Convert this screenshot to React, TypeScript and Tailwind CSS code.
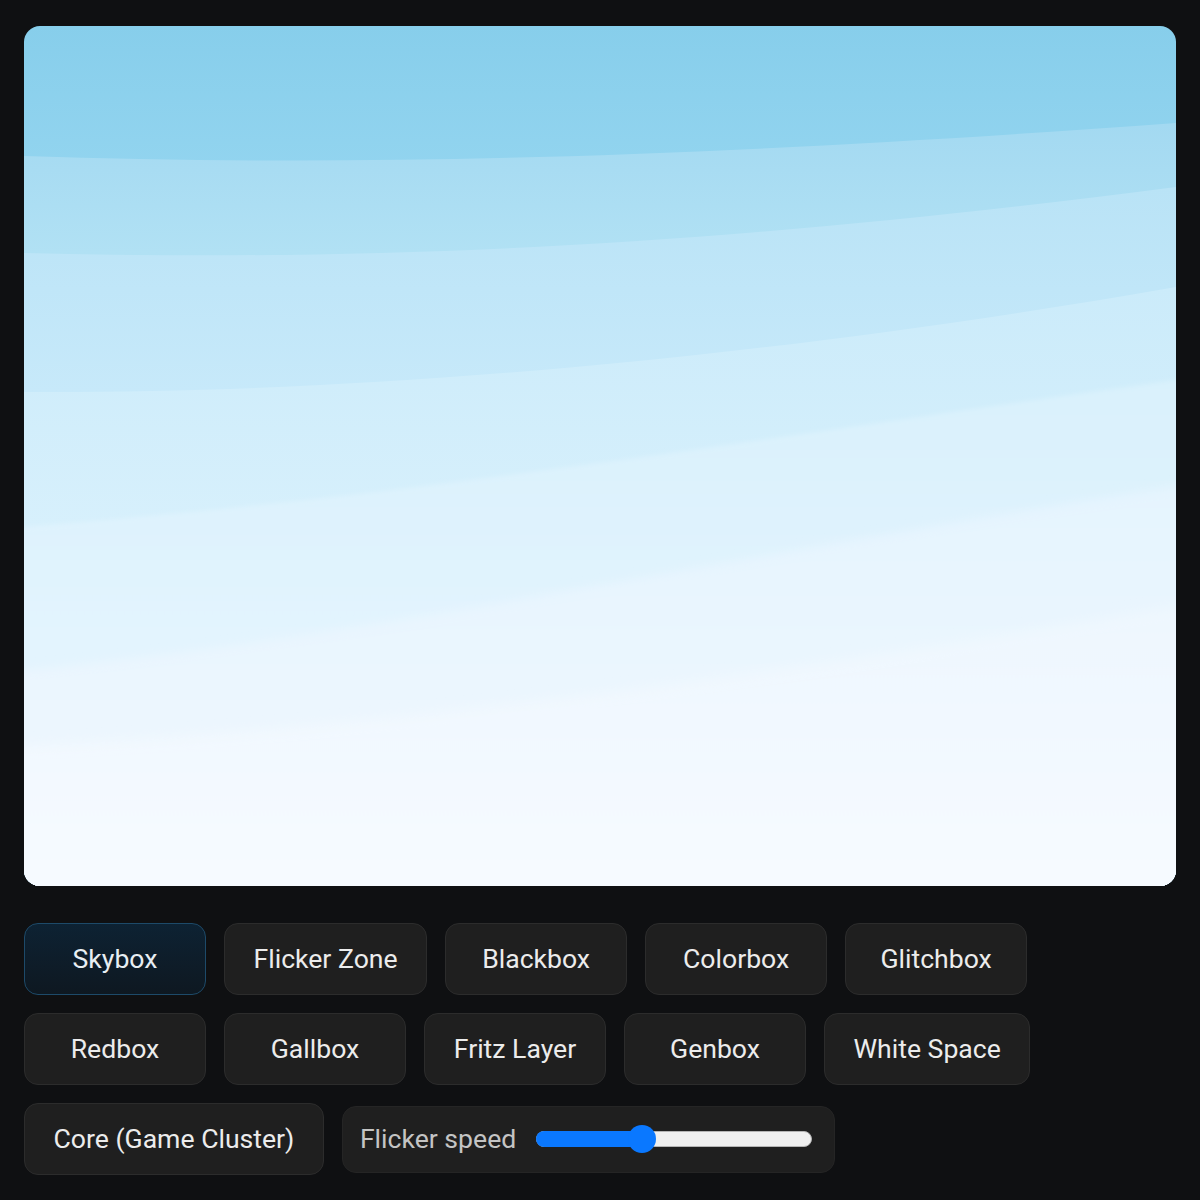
import { useState } from "react";

const modes = [
  "Skybox",
  "Flicker Zone",
  "Blackbox",
  "Colorbox",
  "Glitchbox",
  "Redbox",
  "Gallbox",
  "Fritz Layer",
  "Genbox",
  "White Space",
  "Core (Game Cluster)",
];

// sky bands, top to bottom: upper edge path + gradient stops
const bands = [
  { d: "M0 130 C 350 142, 700 130, 1152 97", y1: 97, y2: 227, from: "#a3d9f1", to: "#b1e1f4", soft: 0 },
  { d: "M0 227 C 350 236, 700 220, 1152 161", y1: 161, y2: 366, from: "#b9e3f6", to: "#c7e9fa", soft: 0 },
  { d: "M0 366 C 300 368, 700 340, 1152 261", y1: 261, y2: 501, from: "#cbebfa", to: "#d7f0fc", soft: 0 },
  { d: "M0 501 C 400 470, 750 410, 1152 354", y1: 354, y2: 620, from: "#d9f1fc", to: "#e3f4fe", soft: 2 },
  { d: "M0 644 C 350 610, 650 540, 1152 460", y1: 460, y2: 700, from: "#e5f4fe", to: "#ecf6fe", soft: 5 },
  { d: "M0 720 C 400 700, 800 640, 1152 580", y1: 580, y2: 860, from: "#eef7fe", to: "#f6faff", soft: 6 },
];

function Sky() {
  return (
    <svg className="block h-full w-full" viewBox="0 0 1152 860" preserveAspectRatio="none">
      <defs>
        <linearGradient id="sky-top" x1="0" y1="0" x2="0" y2="140" gradientUnits="userSpaceOnUse">
          <stop offset="0" stopColor="#87ceeb" />
          <stop offset="1" stopColor="#92d4ef" />
        </linearGradient>
        {bands.map((b, i) => (
          <linearGradient
            key={i}
            id={`sky-band-${i}`}
            x1="0"
            y1={b.y1}
            x2="0"
            y2={b.y2}
            gradientUnits="userSpaceOnUse"
          >
            <stop offset="0" stopColor={b.from} />
            <stop offset="1" stopColor={b.to} />
          </linearGradient>
        ))}
        {bands.map((b, i) =>
          b.soft ? (
            <filter key={i} id={`sky-soft-${i}`} x="-5%" y="-5%" width="110%" height="110%">
              <feGaussianBlur stdDeviation={b.soft} />
            </filter>
          ) : null
        )}
      </defs>
      <rect x="0" y="0" width="1152" height="860" fill="url(#sky-top)" />
      {bands.map((b, i) => (
        <path
          key={i}
          d={`${b.d} L1172 ${b.y1} L1172 880 L-20 880 L-20 ${b.d.split(" ")[1]} Z`}
          fill={`url(#sky-band-${i})`}
          filter={b.soft ? `url(#sky-soft-${i})` : undefined}
        />
      ))}
    </svg>
  );
}

function SpeedSlider({ value }: { value: number }) {
  return (
    <div className="relative h-4 w-[276px]">
      <div className="absolute inset-0 rounded-full border border-[#b4b4b4] bg-[#efefef]" />
      <div
        className="absolute left-0 top-0 h-4 rounded-full bg-[#0a78ff]"
        style={{ width: `calc(14px + (100% - 28px) * ${value})` }}
      />
      <div
        className="absolute top-1/2 h-7 w-7 -translate-y-1/2 rounded-full bg-[#0a78ff]"
        style={{ left: `calc((100% - 28px) * ${value})` }}
      />
    </div>
  );
}

export default function App() {
  const [active, setActive] = useState("Skybox");

  return (
    <div
      className="min-h-[1200px] w-full bg-[#0f1012] px-6 pt-[26px]"
      style={{ fontFamily: "Roboto, 'Noto Sans', sans-serif" }}
    >
      <div className="h-[860px] overflow-hidden rounded-2xl">
        <Sky />
      </div>

      <div className="mt-[37px] flex flex-wrap items-center gap-[18px]">
        {modes.map((m) => (
          <button
            key={m}
            onClick={() => setActive(m)}
            className={
              m === active
                ? "h-[72px] min-w-[182px] rounded-[14px] border border-[#1d4a69] bg-gradient-to-b from-[#0d2233] to-[#0e1821] px-[28.5px] text-[26.6px] text-[#e8eef3]"
                : "h-[72px] min-w-[182px] rounded-[14px] border border-[#2c2c2c] bg-[#1f1f1f] px-[28.5px] text-[26.6px] text-[#ececec]"
            }
          >
            {m}
          </button>
        ))}
        <div className="flex h-[67px] items-center gap-[20px] rounded-[14px] border border-[#252525] bg-[#1f1f1f] pl-[17px] pr-[22px]">
          <span className="text-[26.6px] text-[#c4c4c4]">Flicker speed</span>
          <SpeedSlider value={0.37} />
        </div>
      </div>
    </div>
  );
}
